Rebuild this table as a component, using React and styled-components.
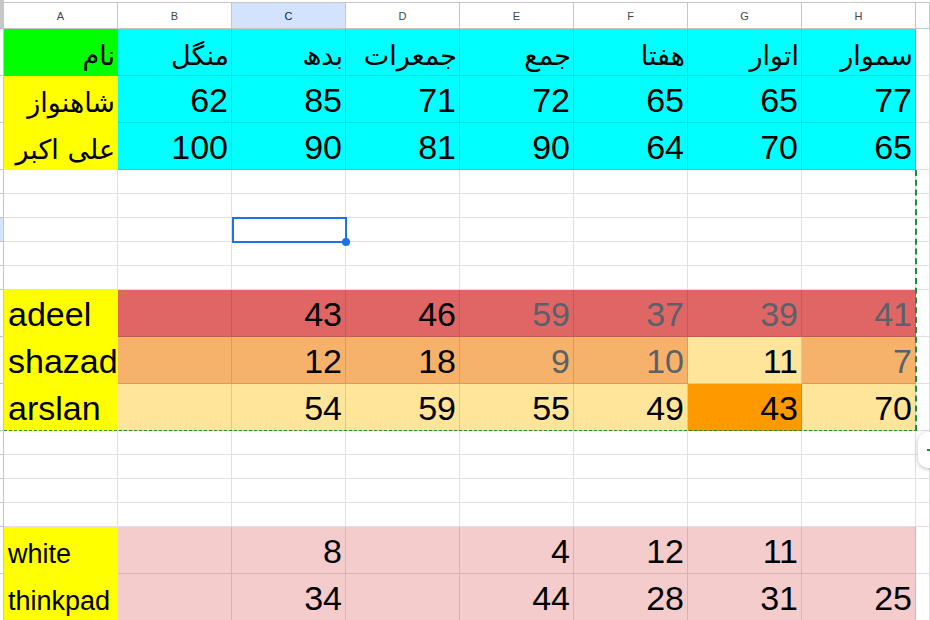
import React from "react";
import styled, { createGlobalStyle } from "styled-components";

const CYAN = "#00ffff";
const GREEN = "#00ff00";
const YELLOW = "#ffff00";
const RED = "#e06666";
const ORANGE = "#f6b26b";
const LIGHT = "#ffe599";
const DEEP = "#ff9900";
const PINK = "#f4cccc";

const letters = ["A", "B", "C", "D", "E", "F", "G", "H"];

// each cell: text, background, grey text?, rtl (urdu)
const cyanRow = (name, values) => ({
  h: 47,
  name: { t: name, bg: YELLOW, rtl: true },
  cells: values.map((v) => ({ t: v, bg: CYAN })),
});

const rows = [
  {
    h: 47,
    name: { t: "نام", bg: GREEN, rtl: true },
    cells: ["منگل", "بدھ", "جمعرات", "جمع", "هفتا", "اتوار", "سموار"].map((t) => ({
      t,
      bg: CYAN,
      rtl: true,
    })),
  },
  cyanRow("شاهنواز", [62, 85, 71, 72, 65, 65, 77]),
  cyanRow("علی اکبر", [100, 90, 81, 90, 64, 70, 65]),
  { h: 24 },
  { h: 24 },
  { h: 24, selected: true },
  { h: 24 },
  { h: 24 },
  {
    h: 47,
    name: { t: "adeel", bg: YELLOW },
    cells: [
      { t: "", bg: RED },
      { t: 43, bg: RED },
      { t: 46, bg: RED },
      { t: 59, bg: RED, grey: true },
      { t: 37, bg: RED, grey: true },
      { t: 39, bg: RED, grey: true },
      { t: 41, bg: RED, grey: true },
    ],
  },
  {
    h: 47,
    name: { t: "shazad", bg: YELLOW },
    cells: [
      { t: "", bg: ORANGE },
      { t: 12, bg: ORANGE },
      { t: 18, bg: ORANGE },
      { t: 9, bg: ORANGE, grey: true },
      { t: 10, bg: ORANGE, grey: true },
      { t: 11, bg: LIGHT },
      { t: 7, bg: ORANGE, grey: true },
    ],
  },
  {
    h: 47,
    name: { t: "arslan", bg: YELLOW },
    cells: [
      { t: "", bg: LIGHT },
      { t: 54, bg: LIGHT },
      { t: 59, bg: LIGHT },
      { t: 55, bg: LIGHT },
      { t: 49, bg: LIGHT },
      { t: 43, bg: DEEP },
      { t: 70, bg: LIGHT },
    ],
  },
  { h: 24 },
  { h: 24 },
  { h: 24 },
  { h: 24 },
  {
    h: 47,
    name: { t: "white", bg: YELLOW, small: true },
    cells: ["", 8, "", 4, 12, 11, ""].map((t) => ({ t, bg: PINK })),
  },
  {
    h: 47,
    name: { t: "thinkpad", bg: YELLOW, small: true },
    cells: ["", 34, "", 44, 28, 31, 25].map((t) => ({ t, bg: PINK })),
  },
];

const App = () => {
  return (
    <>
      <GlobalStyle />
      <Sheet>
        <HeaderRow>
          <Corner />
          {letters.map((l) => (
            <ColHead key={l} $active={l === "C"}>
              {l}
            </ColHead>
          ))}
          <ColHead />
        </HeaderRow>

        {rows.map((row, i) => (
          <Row key={i} $h={row.h}>
            <RowStub $active={row.selected} />
            {row.name ? (
              <Cell
                $bg={row.name.bg}
                $flat
                $left={!row.name.rtl}
                $small={row.name.small}
                $urdu={row.name.rtl}
                dir={row.name.rtl ? "rtl" : "ltr"}
              >
                {row.name.t}
              </Cell>
            ) : (
              <Cell />
            )}
            {row.cells
              ? row.cells.map((c, j) => (
                  <Cell key={j} $bg={c.bg} $grey={c.grey} $urdu={c.rtl} dir={c.rtl ? "rtl" : "ltr"}>
                    {c.t}
                  </Cell>
                ))
              : [0, 1, 2, 3, 4, 5, 6].map((j) => <Cell key={j} />)}
            <Cell />
          </Row>
        ))}

        <Marquee />
        <Selection>
          <Handle />
        </Selection>
        <SideTab>
          <TabMark />
        </SideTab>
      </Sheet>
    </>
  );
};

const GlobalStyle = createGlobalStyle`
  html, body {
    margin: 0;
    padding: 0;
    background: #fff;
    font-family: "Liberation Sans", Arial, "DejaVu Sans", sans-serif;
  }
`;

const Sheet = styled.div`
  position: relative;
  width: 930px;
  height: 620px;
  overflow: hidden;
  padding-top: 2px;
  box-sizing: border-box;
  background: #fff;
`;

const HeaderRow = styled.div`
  display: grid;
  grid-template-columns: 4px repeat(8, 114px) 1fr;
  height: 27px;
  border-top: 1px solid #c4c7c5;
  box-sizing: border-box;
`;

const Corner = styled.div`
  background: #c4c7c5;
  margin-top: -3px;
`;

const ColHead = styled.div`
  display: flex;
  align-items: center;
  justify-content: center;
  font-size: 11px;
  color: ${(p) => (p.$active ? "#041e49" : "#444746")};
  background: ${(p) => (p.$active ? "#d3e3fd" : "#fff")};
  border-right: 1px solid #c4c7c5;
  border-bottom: 1px solid #c4c7c5;
`;

const Row = styled.div`
  display: grid;
  grid-template-columns: 4px repeat(8, 114px) 1fr;
  height: ${(p) => p.$h}px;
`;

const RowStub = styled.div`
  background: ${(p) => (p.$active ? "#d3e3fd" : "#fff")};
  border-right: 1px solid #c4c7c5;
  border-bottom: 1px solid #c4c7c5;
`;

const Cell = styled.div`
  display: flex;
  align-items: flex-end;
  justify-content: ${(p) => (p.$left ? "flex-start" : "flex-end")};
  padding: 0 3px ${(p) => (p.$small ? 3 : p.$urdu ? 4 : 2)}px 4px;
  overflow: hidden;
  white-space: nowrap;
  font-family: ${(p) => (p.$urdu ? '"DejaVu Sans", sans-serif' : '"Liberation Sans", Arial, sans-serif')};
  font-size: ${(p) => (p.$small ? 27 : p.$urdu ? 27 : 34)}px;
  line-height: 1.15;
  color: ${(p) => (p.$grey ? "#5b6168" : "#000")};
  background: ${(p) => p.$bg || "#fff"};
  border-right: 1px solid ${(p) => (p.$flat ? "transparent" : "rgba(0, 0, 0, 0.12)")};
  border-bottom: 1px solid ${(p) => (p.$flat ? "transparent" : "rgba(0, 0, 0, 0.12)")};
  box-sizing: border-box;
  &[dir="rtl"] {
    justify-content: flex-start;
    padding-left: 2px;
    padding-right: 2px;
  }
`;

const Marquee = styled.div`
  position: absolute;
  left: 4px;
  top: 170px;
  width: 913px;
  height: 261px;
  border-right: 2px dashed #1e8e3e;
  border-bottom: 1px dashed #1e8e3e;
  box-sizing: border-box;
  pointer-events: none;
`;

const Selection = styled.div`
  position: absolute;
  left: 232px;
  top: 217px;
  width: 115px;
  height: 26px;
  border: 2px solid #1a73e8;
  box-sizing: border-box;
`;

const Handle = styled.div`
  position: absolute;
  right: -5px;
  bottom: -5px;
  width: 8px;
  height: 8px;
  border-radius: 50%;
  background: #1a73e8;
`;

const SideTab = styled.div`
  position: absolute;
  left: 918px;
  top: 432px;
  width: 40px;
  height: 36px;
  border-radius: 10px;
  background: #fff;
  box-shadow: 0 1px 4px rgba(60, 64, 67, 0.35);
`;

const TabMark = styled.div`
  position: absolute;
  left: 9px;
  top: 17px;
  width: 4px;
  height: 2px;
  background: #1e8e3e;
`;

export default App;
